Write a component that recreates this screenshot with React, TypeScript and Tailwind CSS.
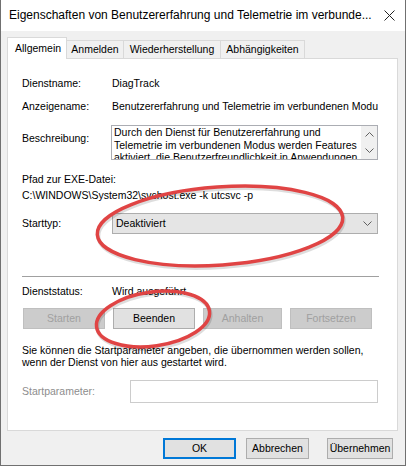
import React from "react";

const tabs = [
  { label: "Allgemein", w: "w-[60px]", active: true },
  { label: "Anmelden", w: "w-[57px]", active: false },
  { label: "Wiederherstellung", w: "w-[97px]", active: false },
  { label: "Abhängigkeiten", w: "w-[84px]", active: false },
];

function Chevron({ dir }: { dir: "up" | "down" }) {
  return (
    <svg width="9" height="5" viewBox="0 0 9 5" className="block">
      {dir === "up" ? (
        <path d="M0.5 4.5 L4.5 0.5 L8.5 4.5" fill="none" stroke="#606060" strokeWidth="1" />
      ) : (
        <path d="M0.5 0.5 L4.5 4.5 L8.5 0.5" fill="none" stroke="#606060" strokeWidth="1" />
      )}
    </svg>
  );
}

function Btn({
  children,
  disabled,
  className = "",
}: {
  children: React.ReactNode;
  disabled?: boolean;
  className?: string;
}) {
  return (
    <div
      className={
        "h-[21px] flex items-center justify-center border whitespace-nowrap " +
        (disabled
          ? "bg-[#cccccc] border-[#bfbfbf] text-[#a0a0a0] "
          : "bg-[#e1e1e1] border-[#adadad] text-black ") +
        className
      }
    >
      {children}
    </div>
  );
}

export default function App() {
  return (
    <div className="w-[406px] h-[468px] bg-white relative font-['Liberation_Sans',Arial,sans-serif] text-[10.5px] leading-[15px] text-black overflow-hidden">
      <div className="h-[466px] border border-t-0 border-[#707070] bg-[#f0f0f0] flex flex-col">
        {/* title bar */}
        <div className="h-[31px] bg-white flex items-center pl-[8px] pr-[10px] shrink-0">
          <span className="flex-1 text-[12px] whitespace-nowrap overflow-hidden">
            Eigenschaften von Benutzererfahrung und Telemetrie im verbunde...
          </span>
          <svg width="11" height="11" viewBox="0 0 11 11">
            <path d="M0.5 0.5 L10.5 10.5 M10.5 0.5 L0.5 10.5" stroke="#222" strokeWidth="1" />
          </svg>
        </div>

        <div className="pl-[6px] pt-[6px]">
          {/* tabs */}
          <div className="flex items-end h-[21px]">
            {tabs.map((t) =>
              t.active ? (
                <div
                  key={t.label}
                  className={`${t.w} h-[22px] -mb-px relative z-10 bg-white border border-b-0 border-[#d9d9d9] flex items-center pl-[7px]`}
                >
                  {t.label}
                </div>
              ) : (
                <div
                  key={t.label}
                  className={`${t.w} h-[18px] bg-[#f0f0f0] border border-b-0 border-l-0 border-[#d9d9d9] flex items-center justify-center whitespace-nowrap`}
                >
                  {t.label}
                </div>
              )
            )}
          </div>

          {/* panel */}
          <div className="w-[391px] h-[373px] bg-white border border-[#d9d9d9] pl-[14px] pr-[18px] flex flex-col">
            <div className="mt-[17px] h-[15px] flex">
              <span className="w-[90px]">Dienstname:</span>
              <span>DiagTrack</span>
            </div>
            <div className="mt-[8px] h-[15px] flex">
              <span className="w-[90px]">Anzeigename:</span>
              <span className="whitespace-nowrap overflow-hidden w-[266px]">
                Benutzererfahrung und Telemetrie im verbundenen Modus
              </span>
            </div>
            <div className="mt-[11px] flex">
              <span className="w-[89px] pt-[6px]">Beschreibung:</span>
              <div className="w-[267px] h-[35px] border border-[#abadb3] flex overflow-hidden">
                <div className="flex-1 pl-[2px] leading-[12.5px] overflow-hidden whitespace-nowrap">
                  Durch den Dienst für Benutzererfahrung und
                  <br />
                  Telemetrie im verbundenen Modus werden Features
                  <br />
                  aktiviert, die Benutzerfreundlichkeit in Anwendungen
                </div>
                <div className="w-[16px] shrink-0 bg-[#f0f0f0] flex flex-col items-center justify-between py-[6px]">
                  <Chevron dir="up" />
                  <Chevron dir="down" />
                </div>
              </div>
            </div>
            <div className="mt-[12px] h-[15px]">Pfad zur EXE-Datei:</div>
            <div className="mt-[1px] h-[15px] whitespace-nowrap">C:\WINDOWS\System32\svchost.exe -k utcsvc -p</div>
            <div className="mt-[10px] flex items-center">
              <span className="w-[90px]">Starttyp:</span>
              <div className="w-[266px] h-[21px] bg-[#e5e5e5] border border-[#adadad] flex items-center pl-[3px] pr-[5px]">
                <span className="flex-1">Deaktiviert</span>
                <Chevron dir="down" />
              </div>
            </div>
            <div className="mt-[42px] h-px bg-[#a0a0a0]" />
            <div className="mt-[7px] h-[15px] flex">
              <span className="w-[90px]">Dienststatus:</span>
              <span>Wird ausgeführt</span>
            </div>
            <div className="mt-[9px] flex gap-[8px] pl-[1px]">
              <Btn disabled className="w-[82px]">Starten</Btn>
              <Btn className="w-[82px]">Beenden</Btn>
              <Btn disabled className="w-[79px]">Anhalten</Btn>
              <Btn disabled className="w-[82px]">Fortsetzen</Btn>
            </div>
            <div className="mt-[15px] leading-[12px] whitespace-nowrap">
              Sie können die Startparameter angeben, die übernommen werden sollen,
              <br />
              wenn der Dienst von hier aus gestartet wird.
            </div>
            <div className="mt-[12px] flex items-center">
              <span className="w-[108px] text-[#8d8d8d]">Startparameter:</span>
              <div className="w-[248px] h-[23px] border border-[#cccccc] bg-white" />
            </div>
          </div>
        </div>

        {/* dialog buttons */}
        <div className="mt-[7px] flex pl-[162px]">
          <div className="w-[73px] h-[21px] bg-[#e1e1e1] border-2 border-[#0078d7] flex items-center justify-center">
            OK
          </div>
          <Btn className="w-[63px] ml-[10px]">Abbrechen</Btn>
          <Btn className="w-[66px] ml-[18px]">Übernehmen</Btn>
        </div>
      </div>

      {/* red highlight ellipses */}
      <svg className="absolute inset-0 pointer-events-none" width="406" height="468" viewBox="0 0 406 468">
        <g fill="none">
          <ellipse cx="221" cy="228" rx="123" ry="39" transform="rotate(-4 221 228)" stroke="#00000022" strokeWidth="4" />
          <ellipse cx="220" cy="226" rx="123" ry="39" transform="rotate(-4 220 226)" stroke="#e04444" strokeWidth="3.5" />
          <ellipse cx="154" cy="321" rx="57" ry="27" transform="rotate(-8 154 321)" stroke="#00000022" strokeWidth="4" />
          <ellipse cx="153" cy="319" rx="57" ry="27" transform="rotate(-8 153 319)" stroke="#e04444" strokeWidth="3.5" />
        </g>
      </svg>
    </div>
  );
}
